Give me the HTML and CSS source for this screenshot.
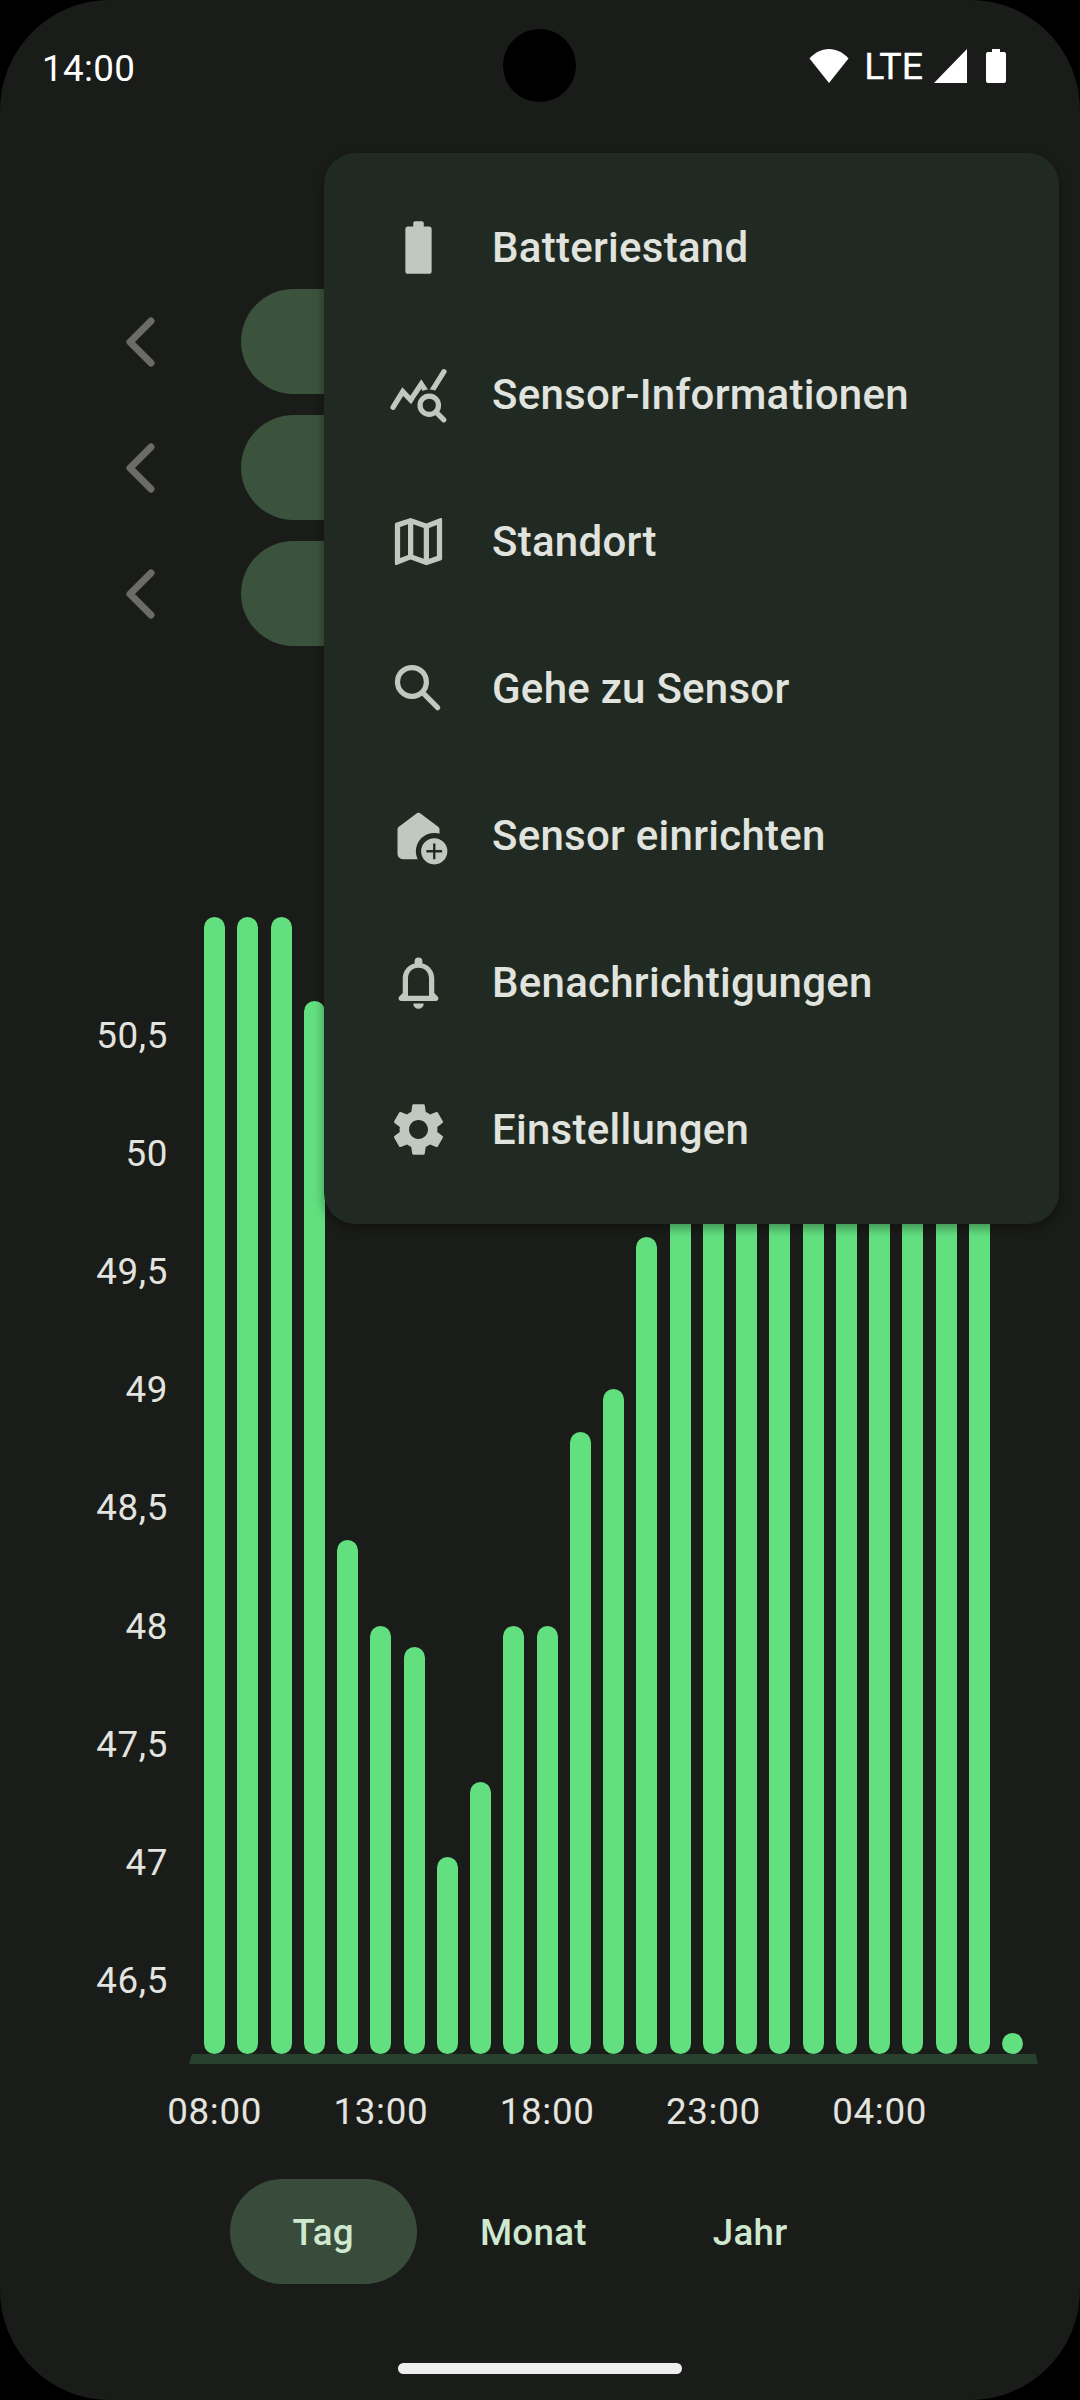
FILE: index.html
```html
<!DOCTYPE html>
<html lang="de">
<head>
<meta charset="utf-8">
<title>Sensor</title>
<link rel="stylesheet" href="styles.css">
</head>
<body>
<div class="screen">
  <header class="status">
    <span class="clock">14:00</span>
    <div class="status-icons">
      <svg class="wifi" viewBox="0 0 40 34"><path d="M20 34 0.5 9.5C6 3.500 12.500 0 20 0s14 3.500 19.500 9.500z"/></svg>
      <span class="network">LTE</span>
      <svg class="signal" viewBox="0 0 33 34"><path d="M33 0v34H0z"/></svg>
      <svg class="battery" viewBox="0 0 20 34"><path d="M6 0h8v3h4a2 2 0 0 1 2 2v27a2 2 0 0 1-2 2H2a2 2 0 0 1-2-2V5a2 2 0 0 1 2-2h4z"/></svg>
    </div>
  </header>
  <div class="camera"></div>

  <main class="content">
    <section class="selectors">
      <div class="selector"><svg class="chevron" viewBox="0 0 30 50"><path d="M25 4 4 25l21 21"/></svg><div class="chip"></div></div>
      <div class="selector"><svg class="chevron" viewBox="0 0 30 50"><path d="M25 4 4 25l21 21"/></svg><div class="chip"></div></div>
      <div class="selector"><svg class="chevron" viewBox="0 0 30 50"><path d="M25 4 4 25l21 21"/></svg><div class="chip"></div></div>
    </section>

    <section class="chart">
      <div class="y-axis">
        <span>50,5</span><span>50</span><span>49,5</span><span>49</span><span>48,5</span><span>48</span><span>47,5</span><span>47</span><span>46,5</span>
      </div>
      <div class="plot">
        <div class="bars">
          <i style="height:1137px"></i><i style="height:1137px"></i><i style="height:1137px"></i><i style="height:1053px"></i><i style="height:514px"></i>
          <i style="height:428px"></i><i style="height:407px"></i><i style="height:197px"></i><i style="height:272px"></i><i style="height:428px"></i>
          <i style="height:428px"></i><i style="height:622px"></i><i style="height:665px"></i><i style="height:817px"></i><i style="height:1137px"></i>
          <i style="height:1137px"></i><i style="height:1137px"></i><i style="height:1137px"></i><i style="height:1137px"></i><i style="height:1137px"></i>
          <i style="height:1137px"></i><i style="height:1137px"></i><i style="height:1137px"></i><i style="height:1137px"></i><i style="height:21px"></i>
        </div>
        <div class="baseline"></div>
        <div class="x-axis"><span>08:00</span><span>13:00</span><span>18:00</span><span>23:00</span><span>04:00</span></div>
      </div>
    </section>

    <nav class="tabs">
      <button class="tab active">Tag</button><button class="tab">Monat</button><button class="tab">Jahr</button>
    </nav>
  </main>
  <div class="home-bar"></div>

  <div class="menu">
    <div class="item">
      <svg viewBox="0 0 24 24"><path d="M10 4V2.700a.7.700 0 0 1 .7-.7h2.600a.7.700 0 0 1 .7.700V4h2a1 1 0 0 1 1 1v16a1 1 0 0 1-1 1H8a1 1 0 0 1-1-1V5a1 1 0 0 1 1-1z"/></svg>
      <span>Batteriestand</span>
    </div>
    <div class="item">
      <svg viewBox="0 0 24 24">
        <mask id="lens-gap"><rect width="24" height="24" fill="#fff"/><circle cx="16.100" cy="16.100" r="6" fill="#000"/></mask>
        <g class="line" mask="url(#lens-gap)"><path d="M2.300 16.900 6 10.900l3.050 3.200L13.050 8l3.200 4.900M21.700 3.300 16 12.400"/></g>
        <g class="line"><circle cx="16.100" cy="16.100" r="3.500"/><path d="m18.800 18.800 2.850 2.850"/></g>
      </svg>
      <span>Sensor-Informationen</span>
    </div>
    <div class="item">
      <svg viewBox="0 0 24 24"><path d="M20.500 3l-.16.03L15 5.100 9 3 3.360 4.900c-.21.070-.36.250-.36.480V20.500c0 .28.220.5.500.5l.16-.03L9 18.900l6 2.100 5.640-1.900c.21-.07.360-.25.360-.48V3.500c0-.28-.22-.5-.5-.5zM10 5.470l4 1.400v11.660l-4-1.400V5.470zm-5 .99l3-1.010v11.700l-3 1.160V6.460zm14 11.080l-3 1.010V6.860l3-1.160v11.840z"/></svg>
      <span>Standort</span>
    </div>
    <div class="item">
      <svg viewBox="0 0 24 24"><g class="line"><circle cx="9.500" cy="9.500" r="5.500"/><path d="m13.800 13.800 5.500 5.500"/></g></svg>
      <span>Gehe zu Sensor</span>
    </div>
    <div class="item">
      <svg viewBox="0 0 24 24">
        <mask id="badge-gap"><rect width="24" height="24" fill="#fff"/><circle cx="18" cy="18" r="7" fill="#000"/></mask>
        <path mask="url(#badge-gap)" d="M4.400 8.800 11.100 3.700a1.500 1.500 0 0 1 1.800 0l6.700 5.100q.4.300.4.800V21H6a2 2 0 0 1-2-2V9.600q0-.5.4-.8z"/>
        <path fill-rule="evenodd" d="M18 13a5 5 0 1 0 0 10 5 5 0 0 0 0-10zm-.45 2h.9v2.550H21v.9h-2.550V21h-.9v-2.550H15v-.9h2.550z"/>
      </svg>
      <span>Sensor einrichten</span>
    </div>
    <div class="item">
      <svg viewBox="0 0 24 24"><path fill-rule="evenodd" d="M10.500 4.750V4a1.500 1.500 0 0 1 3 0v.75C16.200 5.400 18 7.700 18 10.500V16l1.300 1.300c.63.630.2 1.700-.7 1.700H5.400c-.9 0-1.330-1.070-.7-1.700L6 16v-5.500c0-2.800 1.800-5.100 4.500-5.750zM8 17h8v-6.500c0-2.400-1.600-4.100-4-4.100s-4 1.700-4 4.100zM10 20h4a2 2 0 0 1-4 0z"/></svg>
      <span>Benachrichtigungen</span>
    </div>
    <div class="item">
      <svg viewBox="0 0 24 24"><path d="M19.140 12.940c.04-.3.060-.61.060-.94 0-.32-.02-.64-.07-.94l2.030-1.580c.18-.14.230-.41.120-.61l-1.920-3.320c-.12-.22-.37-.29-.59-.22l-2.390.96c-.5-.38-1.030-.7-1.620-.94l-.36-2.540c-.04-.24-.24-.41-.48-.41h-3.840c-.24 0-.43.170-.47.410l-.36 2.540c-.59.240-1.130.57-1.620.94l-2.390-.96c-.22-.08-.47 0-.59.220L2.740 8.870c-.12.210-.08.470.12.610l2.030 1.580c-.05.300-.09.630-.09.940s.02.640.070.940l-2.030 1.580c-.18.140-.23.410-.12.610l1.920 3.320c.12.220.37.290.59.220l2.390-.96c.5.380 1.030.7 1.620.94l.36 2.540c.05.240.24.410.48.410h3.840c.24 0 .44-.17.470-.41l.36-2.540c.59-.24 1.130-.56 1.620-.94l2.390.96c.22.080.47 0 .59-.22l1.920-3.320c.12-.22.070-.47-.12-.61l-2.010-1.580zM12 15.600c-1.980 0-3.600-1.620-3.600-3.600s1.620-3.600 3.600-3.600 3.600 1.620 3.600 3.600-1.620 3.600-3.600 3.600z"/></svg>
      <span>Einstellungen</span>
    </div>
  </div>
</div>
</body>
</html>
```
FILE: styles.css
```css
* { box-sizing: border-box; }
body { margin: 0; background: #000; font-family: Roboto, sans-serif; }
.screen {
  position: relative;
  display: flex;
  flex-direction: column;
  width: 1080px;
  height: 2400px;
  overflow: hidden;
  border-radius: 110px;
  background: #1a1c19;
}
.status {
  display: flex;
  justify-content: space-between;
  align-items: center;
  height: 136px;
  padding: 0 74px 0 42px;
  color: #fff;
  font-size: 36.75px;
}
.clock { line-height: 44px; padding-top: 2px; letter-spacing: .35px; }
.status-icons { display: flex; align-items: center; padding-bottom: 4px; }
.status-icons svg { fill: #fff; }
.wifi { width: 40px; height: 34px; }
.network { margin-left: 15px; font-size: 37.5px; -webkit-text-stroke: .3px #fff; }
.signal { width: 33px; height: 34px; margin-left: 11px; }
.battery { width: 20px; height: 34px; margin-left: 19px; }
.camera {
  position: absolute;
  left: 503px;
  top: 29px;
  width: 73px;
  height: 73px;
  border-radius: 50%;
  background: #000;
}
.content { display: flex; flex-direction: column; }
.selectors {
  display: flex;
  flex-direction: column;
  gap: 21px;
  padding: 153px 126px 0;
}
.selector { display: flex; align-items: center; gap: 85px; height: 105px; }
.chevron { width: 30px; height: 50px; fill: none; stroke: #6b6c6a; stroke-width: 7; stroke-linecap: round; stroke-linejoin: round; }
.chip { width: 598px; height: 105px; border-radius: 53px; background: #3b533c; }
.chart { display: flex; height: 1262px; margin-top: 271px; color: #e3e3df; font-size: 36.75px; letter-spacing: .65px; }
.y-axis {
  display: flex;
  flex-direction: column;
  width: 168px;
  padding-top: 60px;
  text-align: right;
}
.y-axis span { height: 118.120px; line-height: 118.120px; }
.plot { display: flex; flex-direction: column; width: 912px; }
.bars {
  display: flex;
  align-items: flex-end;
  justify-content: space-between;
  height: 1137px;
  padding: 0 57px 0 36px;
}
.bars i { width: 21px; border-radius: 10.500px; background: #62e080; }
.baseline {
  width: 849px;
  height: 10px;
  margin-left: 21px;
  background: #27412e;
  clip-path: polygon(3px 0, 846.500px 0, 100% 100%, 0 100%);
}
.x-axis { display: flex; padding-top: 26px; margin-left: -36.500px; }
.x-axis span { width: 166.250px; text-align: center; line-height: 44px; }
.tabs { display: flex; justify-content: center; }
.tab {
  height: 105px;
  padding: 1px 63px 0;
  border: 0;
  border-radius: 53px;
  background: none;
  color: #cfe8d0;
  font: 500 36.750px Roboto, sans-serif;
  letter-spacing: .26px;
}
.tab.active { background: #394b3b; }
.home-bar {
  width: 284px;
  height: 11px;
  margin: 79px auto 0;
  border-radius: 6px;
  background: #eee;
}
.menu {
  position: absolute;
  left: 324px;
  top: 153px;
  width: 735px;
  padding: 21px 0;
  border-radius: 31.500px;
  background: #202a22;
  box-shadow: 0 4px 11px rgba(0, 0, 0, .38);
}
.item {
  display: flex;
  align-items: center;
  gap: 42px;
  height: 147px;
  padding-left: 63px;
  color: #e1e3de;
  font-size: 42px;
  font-weight: 500;
  letter-spacing: .26px;
}
.item svg { width: 63px; height: 63px; fill: #c1c9bf; }
.line { fill: none; stroke: #c1c9bf; stroke-width: 2; stroke-linecap: round; stroke-linejoin: miter; }
```
